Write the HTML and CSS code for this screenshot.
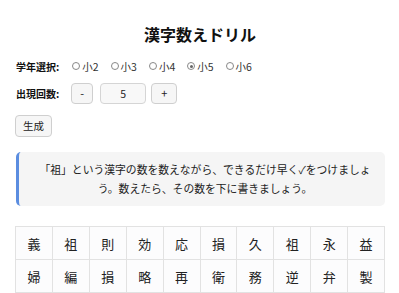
FILE: index.html
```html
<!DOCTYPE html>
<html lang="ja">
<head>
<meta charset="utf-8">
<link rel="stylesheet" href="styles.css">
</head>
<body>
<div class="page">
  <h1 class="title">漢字数えドリル</h1>
  <div class="row grade-row">
    <span class="label">学年選択:</span>
    <label class="radio"><span class="dot"></span>小2</label>
    <label class="radio"><span class="dot"></span>小3</label>
    <label class="radio"><span class="dot"></span>小4</label>
    <label class="radio"><span class="dot checked"></span>小5</label>
    <label class="radio"><span class="dot"></span>小6</label>
  </div>
  <div class="row count-row">
    <span class="label">出現回数:</span>
    <button class="btn minus">-</button>
    <div class="num">5</div>
    <button class="btn plus">+</button>
  </div>
  <div class="row">
    <button class="btn gen">生成</button>
  </div>
  <div class="note">「祖」という漢字の数を数えながら、できるだけ早く✓をつけましょう。数えたら、その数を下に書きましょう。</div>
  <div class="grid">
    <div class="cell">義</div><div class="cell">祖</div><div class="cell">則</div><div class="cell">効</div><div class="cell">応</div><div class="cell">損</div><div class="cell">久</div><div class="cell">祖</div><div class="cell">永</div><div class="cell">益</div>
    <div class="cell">婦</div><div class="cell">編</div><div class="cell">損</div><div class="cell">略</div><div class="cell">再</div><div class="cell">衛</div><div class="cell">務</div><div class="cell">逆</div><div class="cell">弁</div><div class="cell">製</div>
  </div>
</div>
</body>
</html>
```
FILE: styles.css
```css
html, body {
  margin: 0;
  padding: 0;
  background: #ffffff;
}
body {
  font-family: "Noto Sans CJK JP", "Noto Sans", sans-serif;
  color: #222;
}
.page {
  padding: 24px 14px 0 15px;
  display: flex;
  flex-direction: column;
}
.title {
  margin: 0;
  font-size: 16px;
  line-height: 20px;
  font-weight: 700;
  text-align: center;
  color: #111;
}
.row {
  display: flex;
  align-items: center;
}
.grade-row {
  margin-top: 14px;
  height: 16px;
  font-size: 10px;
}
.label {
  font-weight: 700;
  font-size: 10px;
  margin-left: 1px;
  margin-right: 13px;
  color: #111;
}
.radio {
  display: flex;
  align-items: center;
  margin-right: 12px;
  color: #333;
  font-size: 10.5px;
}
.dot {
  width: 8px;
  height: 8px;
  border: 1px solid #888;
  border-radius: 50%;
  box-sizing: border-box;
  margin-right: 2px;
  background: #fff;
  position: relative;
}
.dot.checked::after {
  content: "";
  position: absolute;
  left: 1.5px;
  top: 1.5px;
  width: 3px;
  height: 3px;
  border-radius: 50%;
  background: #666;
}
.count-row {
  margin-top: 9px;
  height: 21px;
}
.count-row .label {
  margin-right: 12px;
}
.btn {
  font-family: inherit;
  font-size: 11px;
  color: #222;
  background: #f6f6f6;
  border: 1px solid #cfcfcf;
  border-radius: 4px;
  padding: 0;
  height: 21px;
  box-sizing: border-box;
  line-height: 1;
}
.minus { width: 22px; }
.plus { width: 26px; }
.num {
  width: 46px;
  height: 21px;
  box-sizing: border-box;
  margin: 0 5px 0 7px;
  border: 1px solid #d5d5d5;
  border-radius: 4px;
  background: #f8f8f8;
  font-size: 10.5px;
  display: flex;
  align-items: center;
  justify-content: center;
  color: #222;
}
.gen {
  margin-top: 11px;
  width: 37px;
  height: 22px;
  font-size: 10.5px;
}
.note {
  margin-top: 15px;
  margin-left: 1px;
  background: #f5f5f5;
  border-left: 3px solid #5b8de0;
  border-radius: 5px;
  padding: 8px 14px 8px 20px;
  font-size: 10.8px;
  line-height: 19px;
  text-align: center;
  color: #222;
  height: 54px;
  box-sizing: border-box;
}
.grid {
  margin-top: 20px;
  display: grid;
  grid-template-columns: repeat(10, 1fr);
  border-top: 1px solid #e2e2e2;
  border-left: 1px solid #e2e2e2;
}
.cell {
  height: 33px;
  box-sizing: border-box;
  border-right: 1px solid #e2e2e2;
  border-bottom: 1px solid #e2e2e2;
  background: #fcfcfd;
  display: flex;
  align-items: center;
  justify-content: center;
  font-size: 13px;
  color: #222;
}
```
